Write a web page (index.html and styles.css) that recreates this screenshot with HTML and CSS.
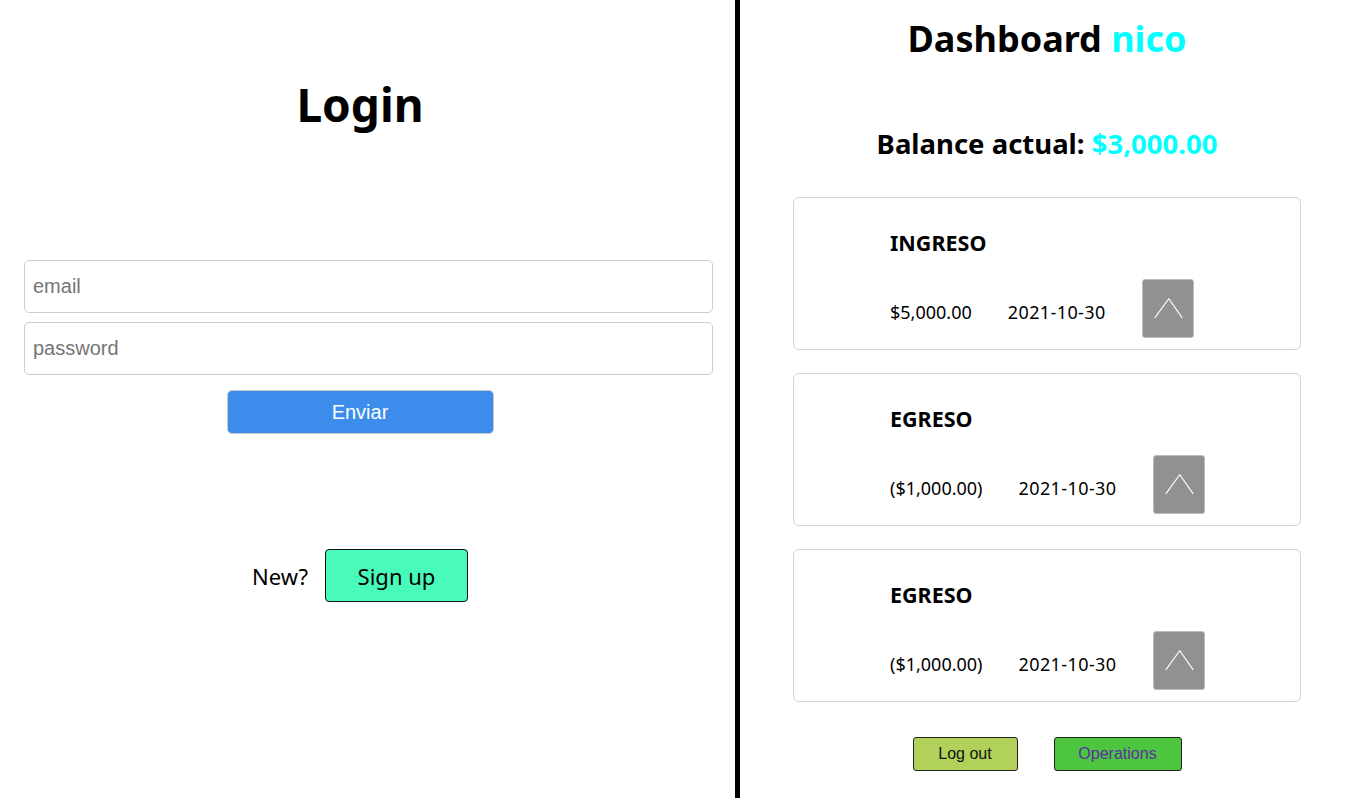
FILE: index.html
```html
<!DOCTYPE html>
<html lang="es">
<head>
<meta charset="utf-8">
<title>App</title>
<link rel="stylesheet" href="styles.css">
</head>
<body>
<div class="page">
  <section class="left">
    <h1 class="login-title">Login</h1>
    <form class="login-form">
      <input class="field" type="text" placeholder="email">
      <input class="field" type="password" placeholder="password">
      <button class="send" type="button">Enviar</button>
    </form>
    <div class="signup-row">
      <span class="new">New?</span>
      <button class="signup" type="button">Sign up</button>
    </div>
  </section>
  <div class="divider"></div>
  <section class="right">
    <h1 class="dash-title">Dashboard <span class="cyan">nico</span></h1>
    <h2 class="balance">Balance actual: <span class="cyan">$3,000.00</span></h2>
    <div class="cards">
      <div class="card">
        <h3 class="card-title">INGRESO</h3>
        <div class="card-row">
          <span class="amount">$5,000.00</span>
          <span class="date">2021-10-30</span>
          <button class="toggle" type="button"><svg width="51" height="58" viewBox="0 0 51 58"><polyline points="12,38 26.3,18.5 40,38" fill="none" stroke="#fff" stroke-width="1.1"/></svg></button>
        </div>
      </div>
      <div class="card">
        <h3 class="card-title">EGRESO</h3>
        <div class="card-row">
          <span class="amount">($1,000.00)</span>
          <span class="date">2021-10-30</span>
          <button class="toggle" type="button"><svg width="51" height="58" viewBox="0 0 51 58"><polyline points="12,38 26.3,18.5 40,38" fill="none" stroke="#fff" stroke-width="1.1"/></svg></button>
        </div>
      </div>
      <div class="card">
        <h3 class="card-title">EGRESO</h3>
        <div class="card-row">
          <span class="amount">($1,000.00)</span>
          <span class="date">2021-10-30</span>
          <button class="toggle" type="button"><svg width="51" height="58" viewBox="0 0 51 58"><polyline points="12,38 26.3,18.5 40,38" fill="none" stroke="#fff" stroke-width="1.1"/></svg></button>
        </div>
      </div>
    </div>
    <div class="actions">
      <button class="logout" type="button">Log out</button>
      <button class="ops" type="button">Operations</button>
    </div>
  </section>
</div>
</body>
</html>
```
FILE: styles.css
```css
* { box-sizing: border-box; }
html, body { margin: 0; padding: 0; background: #fff; }
body { font-family: "Noto Sans", "Open Sans", sans-serif; color: #000; }
.page { display: flex; height: 798px; overflow: hidden; }

.left { width: 735px; padding-right: 15px; display: flex; flex-direction: column; }
.login-title { margin: 72px 0 0; font-size: 46px; line-height: 64px; font-weight: 700; text-align: center; }
.login-form { display: flex; flex-direction: column; align-items: center; margin-top: 124px; }
.field { width: 689px; height: 53px; margin: 0 0 9px 17px; border: 1px solid #ccc; border-radius: 5px; padding: 0 8px; font-family: "Liberation Sans", Arial, sans-serif; font-size: 20px; color: #333; outline: none; }
.field::placeholder { color: #757575; }
.send { margin-top: 6px; width: 267px; height: 44px; background: #3c8deb; color: #fff; border: 1px solid #c9c9c9; border-radius: 5px; font-family: "Liberation Sans", Arial, sans-serif; font-size: 20px; }
.signup-row { display: flex; align-items: center; justify-content: center; gap: 17px; margin-top: 115px; }
.new { font-size: 22px; }
.signup { width: 143px; height: 53px; background: #48fbba; border: 1px solid #111; border-radius: 4px; font-family: "Noto Sans", sans-serif; font-size: 22px; color: #000; padding: 0; }

.divider { width: 5px; background: #000; }

.right { flex: 1; display: flex; flex-direction: column; align-items: center; }
.dash-title { margin: 14px 0 0; font-size: 36px; line-height: 50px; font-weight: 700; }
.cyan { color: #00ffff; }
.balance { margin: 60px 0 0; font-size: 27.5px; line-height: 40px; font-weight: 700; }
.cards { display: flex; flex-direction: column; gap: 23px; margin-top: 33px; }
.card { width: 508px; height: 153px; border: 1px solid #d3d3d3; border-radius: 6px; padding: 30px 0 0 96px; }
.card-title { margin: 0; font-size: 21.5px; line-height: 30px; font-weight: 700; }
.card-row { display: flex; align-items: center; gap: 36px; margin-top: 21px; }
.amount, .date { font-size: 18px; line-height: 24px; padding-top: 6px; }
.date { letter-spacing: 0.4px; }
.toggle { width: 52px; height: 59px; padding: 0; background: #919191; border: 1px solid #bbb; border-radius: 3px; display: flex; }
.toggle svg { display: block; }

.actions { display: flex; gap: 36px; margin-top: 35px; }
.logout, .ops { height: 34px; border: 1px solid #222; border-radius: 3px; font-family: "Liberation Sans", Arial, sans-serif; font-size: 16px; padding: 0; }
.logout { width: 105px; background: #b1d15a; color: #111; }
.ops { width: 128px; background: #4dc53e; color: #5b2fa5; }
```
